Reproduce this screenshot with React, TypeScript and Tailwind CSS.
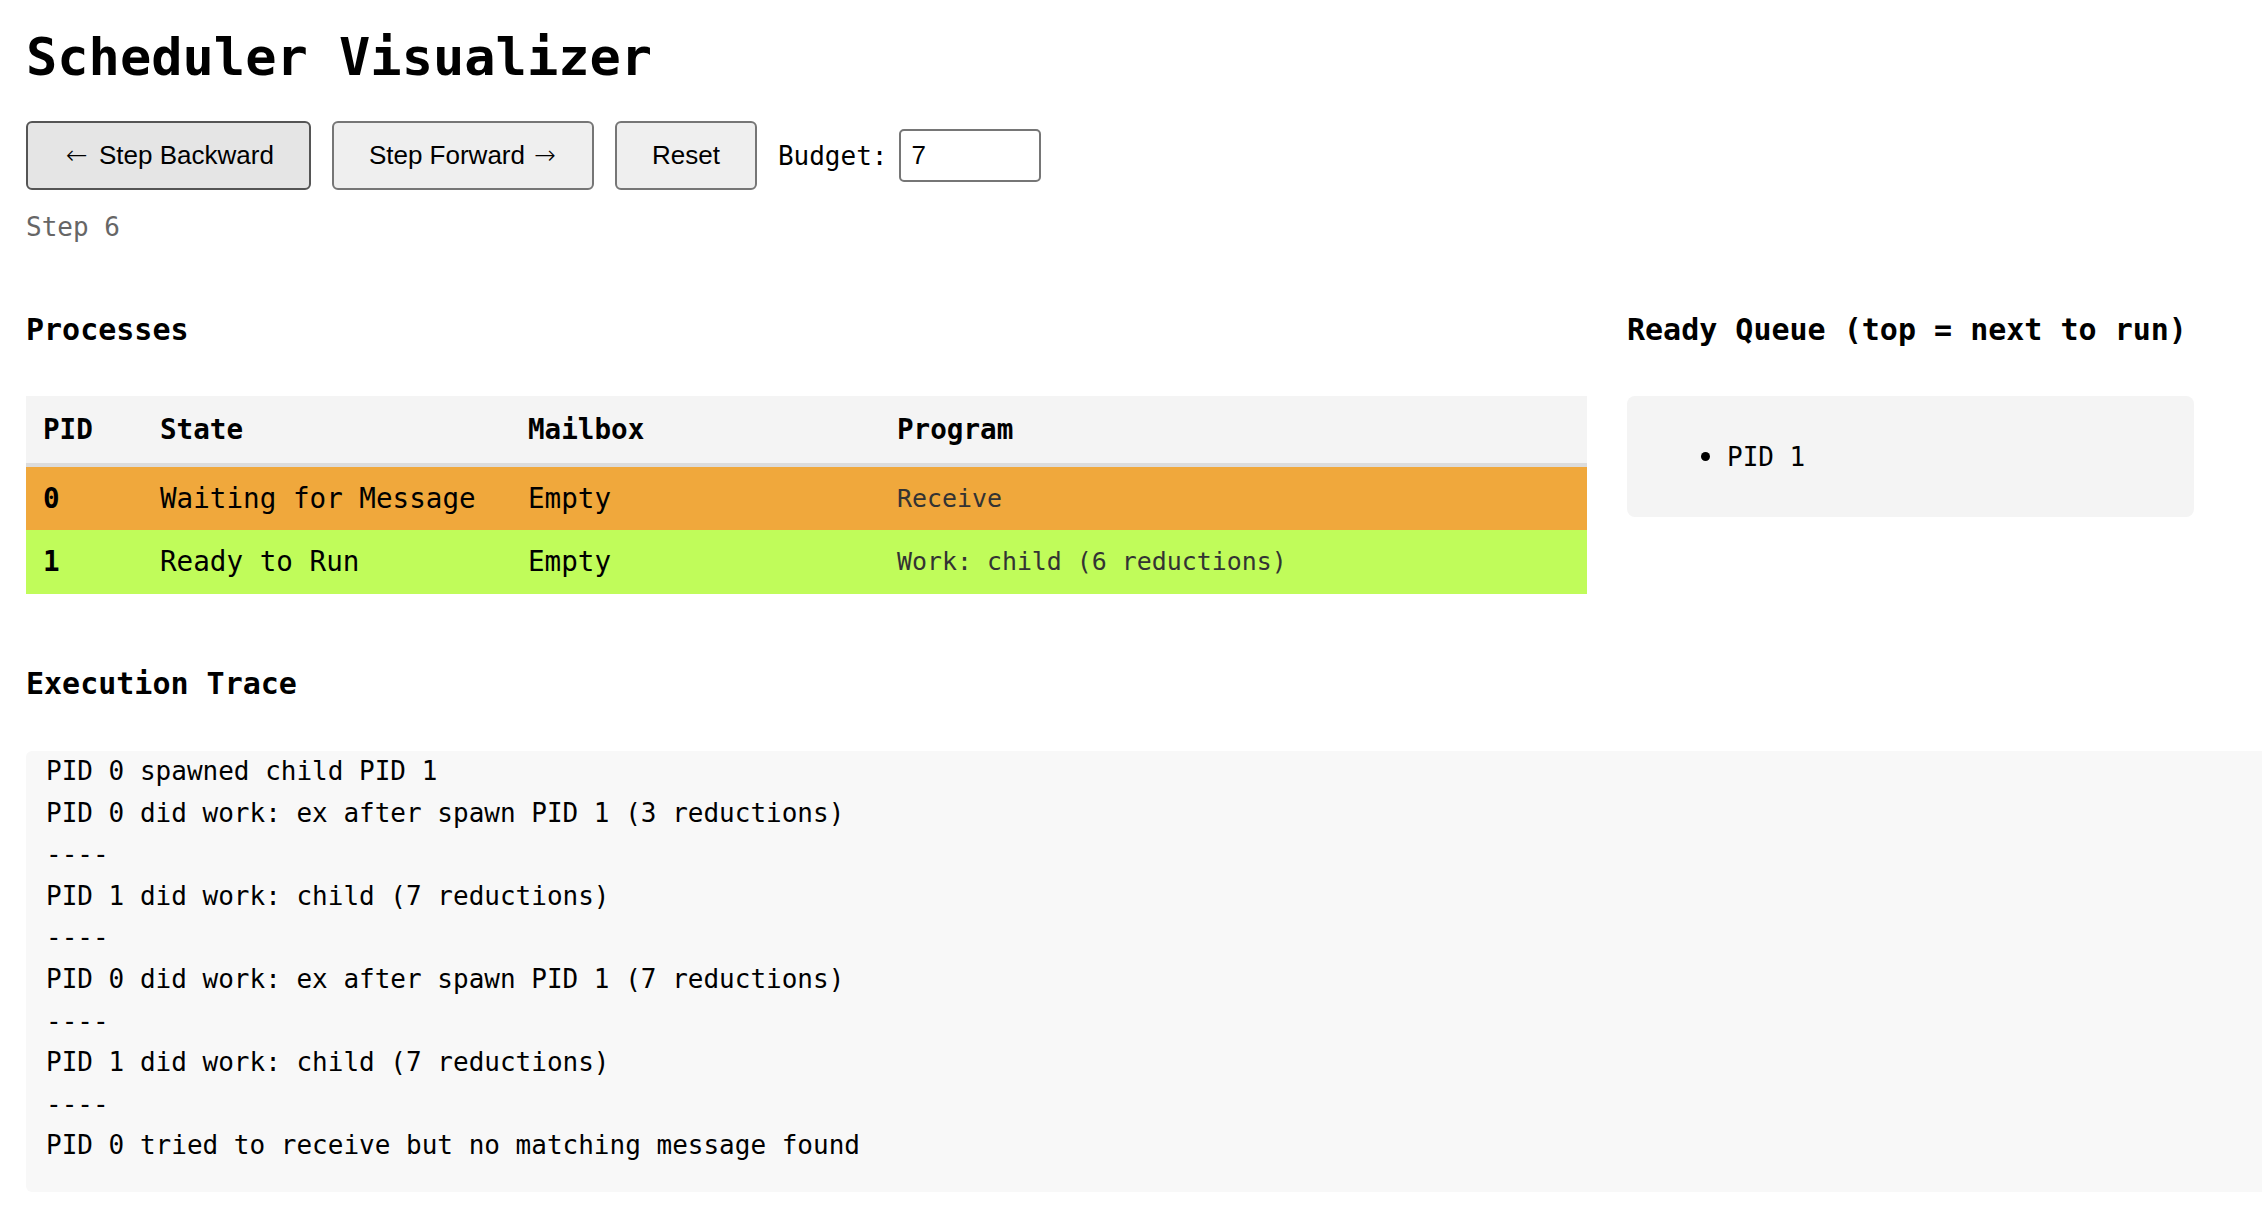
import React from "react";

const processes = [
  {
    pid: "0",
    state: "Waiting for Message",
    mailbox: "Empty",
    program: "Receive",
    row: "bg-[#f0a83c]",
  },
  {
    pid: "1",
    state: "Ready to Run",
    mailbox: "Empty",
    program: "Work: child (6 reductions)",
    row: "bg-[#c0fc5a]",
  },
];

const trace = [
  "PID 0 spawned child PID 1",
  "PID 0 did work: ex after spawn PID 1 (3 reductions)",
  "----",
  "PID 1 did work: child (7 reductions)",
  "----",
  "PID 0 did work: ex after spawn PID 1 (7 reductions)",
  "----",
  "PID 1 did work: child (7 reductions)",
  "----",
  "PID 0 tried to receive but no matching message found",
];

export default function App() {
  return (
    <div className="min-h-screen w-full overflow-hidden bg-white pl-[26px] font-['DejaVu_Sans_Mono',monospace] text-[26px] text-black">
      {/* HEADER */}
      <h1 className="mt-[27px] text-[52px] font-bold leading-[60px]">Scheduler Visualizer</h1>

      {/* CONTROLS */}
      <div className="mt-[34px] flex items-center gap-[21px]">
        <button className="h-[69px] rounded-[6px] border-2 border-[#555] bg-[#e5e5e5] px-[35px] font-['Liberation_Sans',Arial,sans-serif] text-[26px]">
          <span className="inline-block pl-[3px] pr-[4px] font-['DejaVu_Sans',sans-serif] font-light">←</span> Step Backward
        </button>
        <button className="h-[69px] rounded-[6px] border-2 border-[#767676] bg-[#efefef] px-[35px] font-['Liberation_Sans',Arial,sans-serif] text-[26px]">
          Step Forward <span className="inline-block pl-[2px] pr-[1px] font-['DejaVu_Sans',sans-serif] font-light">→</span>
        </button>
        <button className="h-[69px] rounded-[6px] border-2 border-[#767676] bg-[#efefef] px-[35px] font-['Liberation_Sans',Arial,sans-serif] text-[26px]">
          Reset
        </button>
        <div className="flex items-center gap-[12px]">
          <span className="leading-[30px]">Budget:</span>
          <input
            type="text"
            defaultValue="7"
            className="h-[53px] w-[142px] rounded-[5px] border-2 border-[#767676] px-[10px] font-['Liberation_Sans',Arial,sans-serif] text-[26px] outline-none"
          />
        </div>
      </div>
      <p className="mt-[22px] leading-[30px] text-[#666]">Step 6</p>

      {/* PROCESSES + QUEUE */}
      <div className="mt-[70px] flex w-[2168px] items-start gap-[40px]">
        <div className="flex-1">
          <h3 className="text-[30px] font-bold leading-[35px]">Processes</h3>
          <table className="mt-[49px] w-full border-collapse text-left text-[27.6px]">
            <thead>
              <tr className="h-[69px] border-b-4 border-[#dcdcdc] bg-[#f4f4f4]">
                <th className="w-[117px] px-[17px] font-bold">PID</th>
                <th className="w-[368px] px-[17px] font-bold">State</th>
                <th className="w-[369px] px-[17px] font-bold">Mailbox</th>
                <th className="px-[17px] font-bold">Program</th>
              </tr>
            </thead>
            <tbody>
              {processes.map((p) => (
                <tr key={p.pid} className={`h-[64.5px] ${p.row}`}>
                  <td className="px-[17px] font-bold">{p.pid}</td>
                  <td className="px-[17px]">{p.state}</td>
                  <td className="px-[17px]">{p.mailbox}</td>
                  <td className="px-[17px] text-[24.9px] text-[#333]">{p.program}</td>
                </tr>
              ))}
            </tbody>
          </table>
        </div>

        <div className="w-[567px]">
          <h3 className="text-[30px] font-bold leading-[35px]">Ready Queue (top = next to run)</h3>
          <div className="mt-[49px] flex h-[121px] items-center rounded-[8px] bg-[#f4f4f4] pl-[74px]">
            <span className="h-[9px] w-[9px] rounded-full bg-black" />
            <span className="ml-[17px] leading-[30px]">PID 1</span>
          </div>
        </div>
      </div>

      {/* TRACE */}
      <h3 className="mt-[72px] text-[30px] font-bold leading-[35px]">Execution Trace</h3>
      <div className="mt-[50px] w-[2300px] rounded-[6px] bg-[#f8f8f8] pb-[25px] pl-[20px]">
        {trace.map((line, i) => (
          <div key={i} className="whitespace-pre leading-[41.6px]">
            {line}
          </div>
        ))}
      </div>
    </div>
  );
}
